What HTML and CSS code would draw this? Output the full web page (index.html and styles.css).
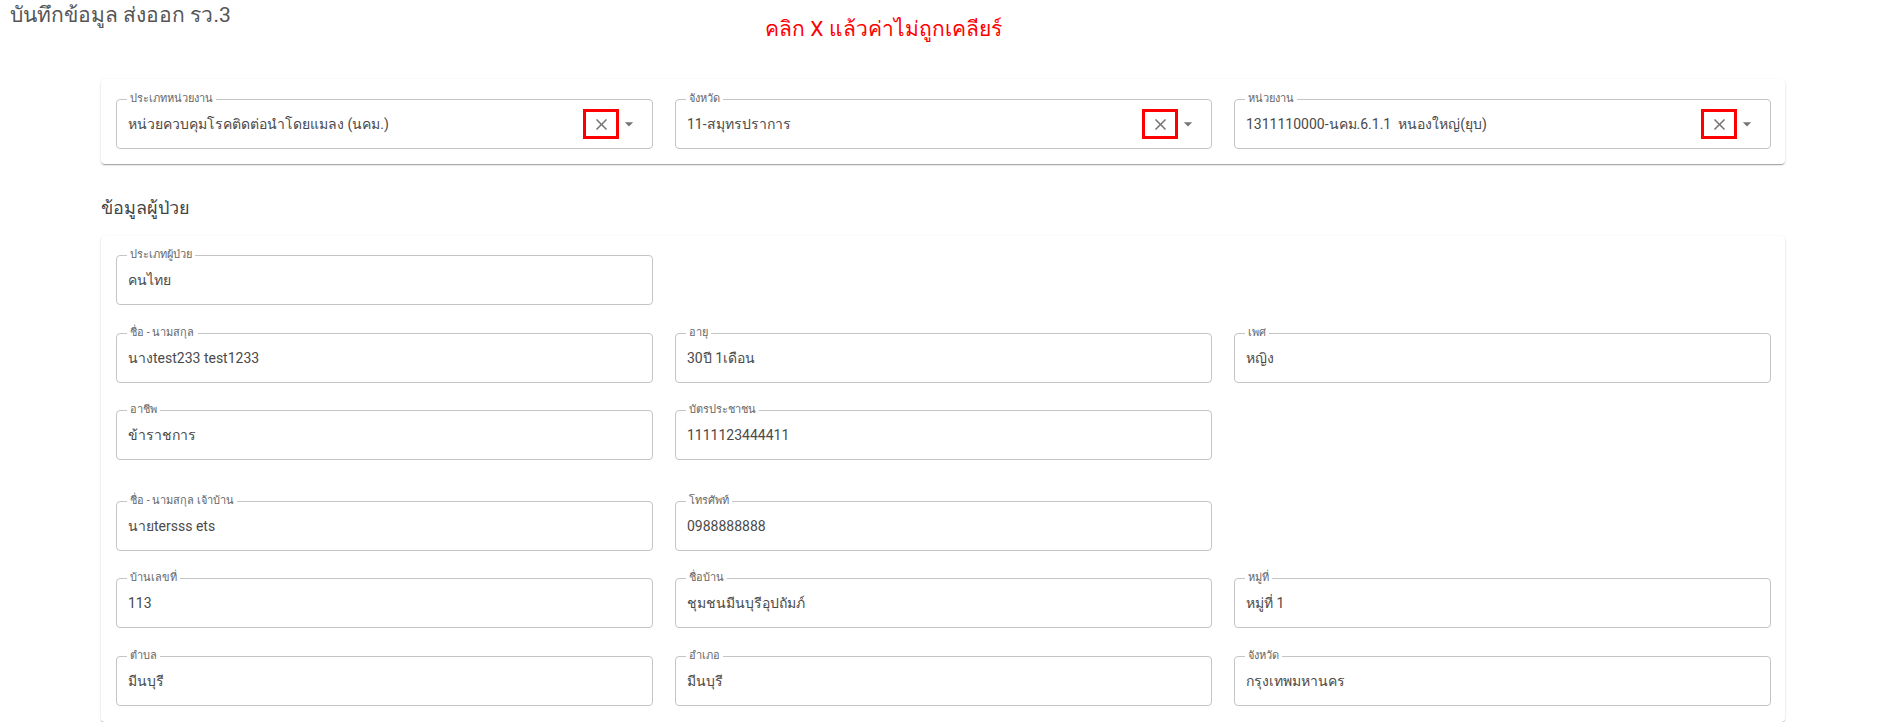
FILE: index.html
```html
<!DOCTYPE html>
<html lang="th">

<head>
    <meta charset="UTF-8">
    <meta name="viewport" content="width=device-width, initial-scale=1.0">
    <title>บันทึกข้อมูล ส่งออก รว.3</title>
    <link rel="stylesheet" href="styles.css">
</head>

<body>
    <div class="page_head">
        <h1 class="page_title">บันทึกข้อมูล ส่งออก รว.3</h1>
        <p class="note">คลิก X แล้วค่าไม่ถูกเคลียร์</p>
    </div>

    <div class="content">
        <!-- หน่วยงาน -->
        <div class="card card_top">
            <div class="row">
                <div class="field">
                    <label>ประเภทหน่วยงาน</label>
                    <span class="value">หน่วยควบคุมโรคติดต่อนำโดยแมลง (นคม.)</span>
                    <button class="clear"><svg viewBox="0 0 24 24"><path d="M19 6.41 17.59 5 12 10.59 6.41 5 5 6.41 10.59 12 5 17.59 6.41 19 12 13.41 17.59 19 19 17.59 13.41 12z"/></svg></button>
                    <svg class="arrow" viewBox="0 0 24 24"><path d="M7 10l5 5 5-5z"/></svg>
                </div>
                <div class="field">
                    <label>จังหวัด</label>
                    <span class="value">11-สมุทรปราการ</span>
                    <button class="clear"><svg viewBox="0 0 24 24"><path d="M19 6.41 17.59 5 12 10.59 6.41 5 5 6.41 10.59 12 5 17.59 6.41 19 12 13.41 17.59 19 19 17.59 13.41 12z"/></svg></button>
                    <svg class="arrow" viewBox="0 0 24 24"><path d="M7 10l5 5 5-5z"/></svg>
                </div>
                <div class="field">
                    <label>หน่วยงาน</label>
                    <span class="value">1311110000-นคม.6.1.1&nbsp; หนองใหญ่(ยุบ)</span>
                    <button class="clear"><svg viewBox="0 0 24 24"><path d="M19 6.41 17.59 5 12 10.59 6.41 5 5 6.41 10.59 12 5 17.59 6.41 19 12 13.41 17.59 19 19 17.59 13.41 12z"/></svg></button>
                    <svg class="arrow" viewBox="0 0 24 24"><path d="M7 10l5 5 5-5z"/></svg>
                </div>
            </div>
        </div>

        <h2 class="section_title">ข้อมูลผู้ป่วย</h2>

        <!-- ข้อมูลผู้ป่วย -->
        <div class="card card_patient">
            <div class="row">
                <div class="field"><label>ประเภทผู้ป่วย</label><span class="value">คนไทย</span></div>
            </div>
            <div class="row">
                <div class="field"><label>ชื่อ - นามสกุล</label><span class="value">นางtest233 test1233</span></div>
                <div class="field"><label>อายุ</label><span class="value">30ปี 1เดือน</span></div>
                <div class="field"><label>เพศ</label><span class="value">หญิง</span></div>
            </div>
            <div class="row">
                <div class="field"><label>อาชีพ</label><span class="value">ข้าราชการ</span></div>
                <div class="field"><label>บัตรประชาชน</label><span class="value">1111123444411</span></div>
            </div>
            <div class="row row_space">
                <div class="field"><label>ชื่อ - นามสกุล เจ้าบ้าน</label><span class="value">นายtersss ets</span></div>
                <div class="field"><label>โทรศัพท์</label><span class="value">0988888888</span></div>
            </div>
            <div class="row">
                <div class="field"><label>บ้านเลขที่</label><span class="value">113</span></div>
                <div class="field"><label>ชื่อบ้าน</label><span class="value">ชุมชนมีนบุรีอุปถัมภ์</span></div>
                <div class="field"><label>หมู่ที่</label><span class="value">หมู่ที่ 1</span></div>
            </div>
            <div class="row">
                <div class="field"><label>ตำบล</label><span class="value">มีนบุรี</span></div>
                <div class="field"><label>อำเภอ</label><span class="value">มีนบุรี</span></div>
                <div class="field"><label>จังหวัด</label><span class="value">กรุงเทพมหานคร</span></div>
            </div>
        </div>
    </div>
</body>

</html>
```

FILE: styles.css
```css
* {
    margin: 0;
    padding: 0;
    box-sizing: border-box;
}

body {
    font-family: Roboto, "Noto Sans", sans-serif;
    background-color: #fff;
    color: #4a4a4a;
}

.page_head {
    display: grid;
    grid-template-columns: 755px auto;
    height: 79px;
    padding-left: 10px;
}

.page_title {
    margin-top: 0;
    font-size: 21px;
    font-weight: 400;
    line-height: 30px;
    color: #555;
}

.note {
    margin-top: 14px;
    font-size: 21px;
    line-height: 30px;
    color: #f00;
}

.content {
    margin: 0 114px 0 101px;
}

.card {
    background-color: #fff;
    border-radius: 4px;
    box-shadow: 0 2px 1px -1px rgba(0, 0, 0, .2), 0 1px 1px 0 rgba(0, 0, 0, .14), 0 1px 3px 0 rgba(0, 0, 0, .12);
}

.card_top {
    padding: 20px 14px 15px 15px;
}

.card_patient {
    display: flex;
    flex-direction: column;
    gap: 27.5px;
    padding: 19px 14px 16px 15px;
}

.row {
    display: grid;
    grid-template-columns: repeat(3, 1fr);
    column-gap: 22px;
}

.row_space {
    margin-top: 13px;
}

.section_title {
    padding: 29px 0 13px;
    font-size: 18px;
    font-weight: 400;
    line-height: 30px;
    color: #444;
}

.field {
    position: relative;
    display: flex;
    align-items: center;
    height: 50px;
    padding: 0 13px 0 11px;
    border: 1px solid #c4c4c4;
    border-radius: 4px;
}

.field label {
    position: absolute;
    top: -8px;
    left: 10px;
    padding: 0 3px;
    font-size: 11px;
    line-height: 14px;
    color: #666;
    background-color: #fff;
}

.field .value {
    flex: 1;
    font-size: 14px;
    white-space: nowrap;
}

.field .clear {
    display: flex;
    align-items: center;
    justify-content: center;
    width: 36px;
    height: 30px;
    border: 3px solid #f00;
    background: none;
}

.field .clear svg {
    width: 19px;
    height: 19px;
    fill: rgba(0, 0, 0, .54);
}

.field .arrow {
    width: 20px;
    height: 20px;
    fill: rgba(0, 0, 0, .54);
}
```
